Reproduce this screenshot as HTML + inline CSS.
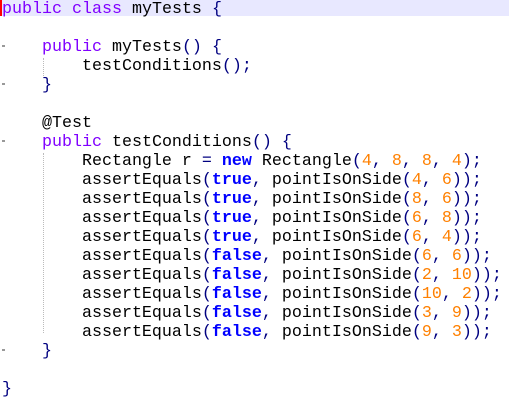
<!DOCTYPE html>
<html><head><style>
body{margin:0;background:#fff;width:509px;height:413px;overflow:hidden;position:relative}
.hl{position:absolute;left:0;top:0;width:509px;height:16px;background:#e8e8ff}
.red{position:absolute;left:0;top:0;width:2px;height:16px;background:#f00}
pre{position:absolute;left:2px;top:0px;margin:0;font-family:"Liberation Mono",monospace;font-size:16.67px;line-height:19px;color:#000}
.k{color:#8000ff}
.b{color:#000080}
.n{color:#ff8000}
.t{color:#0000ff;font-weight:bold}
.g{position:absolute;left:2px;width:3px;height:2px;background:#999}
.v{position:absolute;border-left:1px dotted #bbb}
</style></head><body>
<div class="hl"></div><div class="red"></div>
<div class="v" style="left:43px;top:58px;height:18px"></div>
<div class="v" style="left:43px;top:153px;height:180px"></div>
<div class="g" style="top:45px"></div>
<div class="g" style="top:83px"></div>
<div class="g" style="top:140px"></div>
<div class="g" style="top:349px"></div>
<pre><span class="k">public</span> <span class="k">class</span> myTests <span class="b">{</span>

    <span class="k">public</span> myTests<span class="b">()</span> <span class="b">{</span>
        testConditions<span class="b">();</span>
    <span class="b">}</span>

    @Test
    <span class="k">public</span> testConditions<span class="b">()</span> <span class="b">{</span>
        Rectangle r <span class="b">=</span> <span class="t">new</span> Rectangle<span class="b">(</span><span class="n">4</span><span class="b">,</span> <span class="n">8</span><span class="b">,</span> <span class="n">8</span><span class="b">,</span> <span class="n">4</span><span class="b">);</span>
        assertEquals<span class="b">(</span><span class="t">true</span><span class="b">,</span> pointIsOnSide<span class="b">(</span><span class="n">4</span><span class="b">,</span> <span class="n">6</span><span class="b">));</span>
        assertEquals<span class="b">(</span><span class="t">true</span><span class="b">,</span> pointIsOnSide<span class="b">(</span><span class="n">8</span><span class="b">,</span> <span class="n">6</span><span class="b">));</span>
        assertEquals<span class="b">(</span><span class="t">true</span><span class="b">,</span> pointIsOnSide<span class="b">(</span><span class="n">6</span><span class="b">,</span> <span class="n">8</span><span class="b">));</span>
        assertEquals<span class="b">(</span><span class="t">true</span><span class="b">,</span> pointIsOnSide<span class="b">(</span><span class="n">6</span><span class="b">,</span> <span class="n">4</span><span class="b">));</span>
        assertEquals<span class="b">(</span><span class="t">false</span><span class="b">,</span> pointIsOnSide<span class="b">(</span><span class="n">6</span><span class="b">,</span> <span class="n">6</span><span class="b">));</span>
        assertEquals<span class="b">(</span><span class="t">false</span><span class="b">,</span> pointIsOnSide<span class="b">(</span><span class="n">2</span><span class="b">,</span> <span class="n">10</span><span class="b">));</span>
        assertEquals<span class="b">(</span><span class="t">false</span><span class="b">,</span> pointIsOnSide<span class="b">(</span><span class="n">10</span><span class="b">,</span> <span class="n">2</span><span class="b">));</span>
        assertEquals<span class="b">(</span><span class="t">false</span><span class="b">,</span> pointIsOnSide<span class="b">(</span><span class="n">3</span><span class="b">,</span> <span class="n">9</span><span class="b">));</span>
        assertEquals<span class="b">(</span><span class="t">false</span><span class="b">,</span> pointIsOnSide<span class="b">(</span><span class="n">9</span><span class="b">,</span> <span class="n">3</span><span class="b">));</span>
    <span class="b">}</span>

<span class="b">}</span></pre>
</body></html>
